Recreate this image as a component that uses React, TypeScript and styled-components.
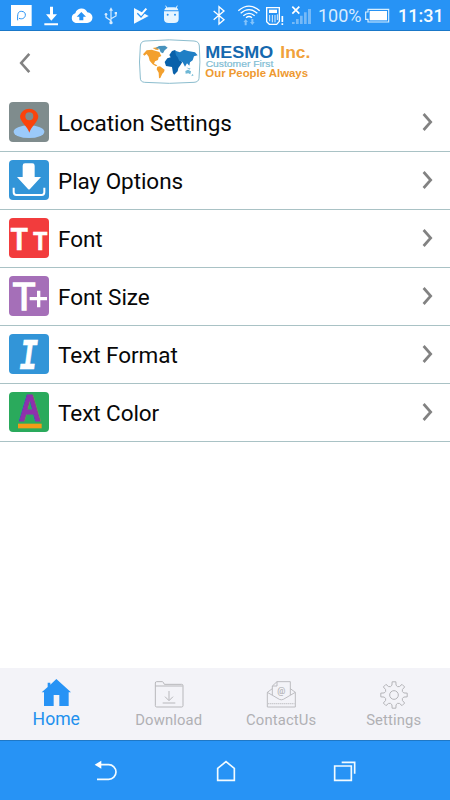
import React from "react";
import styled, { createGlobalStyle } from "styled-components";

const Global = createGlobalStyle`
  * { box-sizing: border-box; }
  body { margin: 0; background: #fff; font-family: Roboto, "Liberation Sans", sans-serif; }
  svg { display: block; flex: none; overflow: visible; }
`;

const Screen = styled.div`
  width: 450px;
  height: 800px;
  display: flex;
  flex-direction: column;
  background: #fff;
  overflow: hidden;
`;

const StatusBar = styled.div`
  height: 31px;
  flex: none;
  display: flex;
  justify-content: space-between;
  background: #2793f5;
  border-bottom: 1px solid #1a78c8;
  color: #fff;
`;

const StatusGroup = styled.div<{ $start?: number; $end?: number }>`
  display: flex;
  align-items: center;
  padding-left: ${(p) => p.$start ?? 0}px;
  padding-right: ${(p) => p.$end ?? 0}px;
`;

const StatusIcon = styled.svg<{ $gap: number }>`
  height: 30px;
  margin-left: ${(p) => p.$gap}px;
`;

const StatusText = styled.span<{ $w: number; $gap: number; $bold?: boolean }>`
  width: ${(p) => p.$w}px;
  margin-left: ${(p) => p.$gap}px;
  font-size: 18px;
  line-height: 30px;
  padding-top: 2px;
  font-weight: ${(p) => (p.$bold ? 500 : 400)};
  color: ${(p) => (p.$bold ? "#f4fbff" : "#d8ecff")};
  white-space: nowrap;
`;

const Header = styled.header`
  height: 63px;
  flex: none;
  display: flex;
  align-items: flex-start;
  padding: 3px 0 0 19px;
`;

const BackButton = styled.button`
  border: 0;
  padding: 18px 0 0;
  background: none;
  width: 111px;
`;

const List = styled.ul`
  list-style: none;
  margin: 0;
  padding: 0;
  flex: 1;
`;

const Row = styled.li`
  height: 58px;
  display: flex;
  align-items: center;
  padding: 0 16px 2px 9px;
  border-bottom: 1px solid #a9c2c5;
`;

const RowLabel = styled.span`
  flex: 1;
  margin-left: 9px;
  padding-top: 2px;
  font-size: 22.5px;
  line-height: 28px;
  letter-spacing: -0.06px;
  color: #080808;
`;

const TabBar = styled.nav`
  height: 72px;
  flex: none;
  display: grid;
  grid-template-columns: repeat(4, 1fr);
  background: #f3f3f8;
`;

const Tab = styled.div<{ $active?: boolean }>`
  display: flex;
  flex-direction: column;
  align-items: center;
  padding-top: 10px;
  color: ${(p) => (p.$active ? "#2190ee" : "#b0b0b4")};
  font-size: ${(p) => (p.$active ? 17.6 : 14.8)}px;
  line-height: 22px;
  letter-spacing: ${(p) => (p.$active ? 0 : 0.15)}px;
`;

const TabLabel = styled.span<{ $gap?: number }>`
  margin-top: ${(p) => p.$gap ?? 1}px;
`;

const NavBar = styled.div`
  height: 60px;
  flex: none;
  display: flex;
  justify-content: space-between;
  align-items: flex-start;
  padding: 19px 93px 0 94px;
  background: #2793f5;
  border-top: 1px solid #1f78c6;
`;

const Chevron = ({ left }: { left?: boolean }) => (
  <svg width="12" height="22" viewBox="0 0 12 22" fill="none" stroke="#828282" strokeWidth={left ? 2.6 : 2.7}>
    <path d={left ? "M10.3 1.9 2.2 11l8.1 9.1" : "M1.6 3 8.7 11l-7.1 8"} />
  </svg>
);

const BrandLogo = () => (
  <svg width="190" height="56" viewBox="0 0 570 168">
    <path d="M45 21Q118 14 192 21 207 22 208 36 212 84 207 133 206 144 192 145 118 151 44 145 31 144 31 132 26 84 31 36 32 22 45 21Z" fill="#fff" stroke="#8cbdce" strokeWidth="3" />
    <g fill="#f3a02e">
      <path d="M39 61 50 49 65 47 78 51 88 54 94 66 86 70 84 78 75 82 72 89 82 94 78 97 68 91 59 80 56 68 50 60 43 65Z" />
      <path d="M82 98 90 97 104 107 102 114 97 119 91 132 87 133 86 116 80 106Z" />
      <path d="M68 42 82 40 86 48 77 47Z" />
    </g>
    <path d="M76 43 87 36 105 35 113 41 104 49 99 58 92 55 88 44Z" fill="#4792bd" />
    <path d="M118 63 126 51 135 48 142 56 150 65 148 78 157 84 151 94 145 102 143 112 133 122 129 118 126 99 108 96 104 84 112 73 122 70Z" fill="#0961aa" />
    <path d="M135 50 150 55 162 47 174 51 195 55 203 64 192 67 188 79 180 85 178 95 171 88 165 98 158 85 147 79 143 70 138 64Z" fill="#207fc5" />
    <path d="M166 111 174 107 183 112 181 121 175 118 167 119ZM169 100l7 3 6 0-4 4ZM187 120l4 4-7 3Z" fill="#6eb7d5" />
    <g fontFamily="Liberation Sans, Arial, sans-serif" fontWeight="700">
      <text x="226" y="71" fontSize="50" fill="#1568ae" textLength="204" lengthAdjust="spacingAndGlyphs">MESMO</text>
      <text x="451" y="71" fontSize="50" fill="#f0a13b" textLength="90" lengthAdjust="spacingAndGlyphs">Inc.</text>
      <text x="227" y="98" fontSize="26" fontWeight="400" fill="#7fbdd4" stroke="#7fbdd4" strokeWidth="0.6" textLength="203" lengthAdjust="spacingAndGlyphs">Customer First</text>
      <text x="226" y="130" fontSize="33" fill="#ee9930" textLength="308" lengthAdjust="spacingAndGlyphs">Our People Always</text>
    </g>
  </svg>
);

const Tile = ({ color, children }: { color: string; children: React.ReactNode }) => (
  <svg width="40" height="40" viewBox="0 0 120 120" fontFamily="Liberation Sans, Arial, sans-serif" fontWeight="700">
    <rect width="120" height="120" rx="12" fill={color} />
    {children}
  </svg>
);

const rows = [
  {
    label: "Location Settings",
    icon: (
      <Tile color="#7f8c8d">
        <ellipse cx="60" cy="89" rx="46" ry="19" fill="#9bcafa" />
        <path fillRule="evenodd" d="M61 92C56 73 33 60 33 42a28 27 0 0 1 55 0C88 60 66 73 61 92ZM61 31a12 12 0 1 0 0 24 12 12 0 0 0 0-24Z" fill="#fb430b" />
      </Tile>
    ),
  },
  {
    label: "Play Options",
    icon: (
      <Tile color="#3295d8">
        <path d="M41 17q0-7 7-7h22q7 0 7 7v34h19L63 87q-3 3-6 0L24 51h17Z" fill="#fff" />
        <path d="M14 83v14q0 8 8 8h76q8 0 8-8V83" fill="none" stroke="#fff" strokeWidth="6" />
      </Tile>
    ),
  },
  {
    label: "Font",
    icon: (
      <Tile color="#f23c3d">
        <g fill="#fff" stroke="#fff" strokeWidth="2">
          <text x="5" y="97" fontSize="94" textLength="51" lengthAdjust="spacingAndGlyphs">T</text>
          <text x="73" y="97" fontSize="77" textLength="42" lengthAdjust="spacingAndGlyphs">T</text>
        </g>
      </Tile>
    ),
  },
  {
    label: "Font Size",
    icon: (
      <Tile color="#a56fb8">
        <text x="11" y="102" fontSize="116" fill="#fff" fontWeight="400" stroke="#fff" strokeWidth="5" textLength="68" lengthAdjust="spacingAndGlyphs">T</text>
        <path d="M62 68h52M89 44v50" stroke="#fff" strokeWidth="10" />
      </Tile>
    ),
  },
  {
    label: "Text Format",
    icon: (
      <Tile color="#3295d8">
        <text x="31" y="104" fontSize="133" fill="#fff" stroke="#fff" strokeWidth="2" fontFamily="Liberation Mono, monospace" fontStyle="italic" textLength="55" lengthAdjust="spacingAndGlyphs">I</text>
      </Tile>
    ),
  },
  {
    label: "Text Color",
    icon: (
      <Tile color="#2aaa5c">
        <text x="29" y="87" fontSize="110" fill="#8e30ad" stroke="#8e30ad" strokeWidth="3" textLength="66" lengthAdjust="spacingAndGlyphs">A</text>
        <rect x="27" y="95" width="71" height="14" fill="#f39c18" />
      </Tile>
    ),
  },
];

const HomeIcon = () => (
  <svg width="30" height="30" viewBox="0 0 90 90">
    <path d="M46 3 90 43H83V84H55V51H38V84H9V43H2L20 27V14h8v6Z" fill="#2793f5" />
  </svg>
);

const DownloadIcon = () => (
  <svg width="30" height="30" viewBox="0 0 90 90" fill="none" stroke="#b7b7bb" strokeWidth="3" strokeLinejoin="round">
    <path d="M4 24V15q0-4 4-4h17q3 0 6 8h52q4 0 4 4v60q0 4-4 4H8q-4 0-4-4V24H86M45 39V67M33 56l12 12 12-12M26 75h38" />
  </svg>
);

const ContactIcon = () => (
  <svg width="30" height="30" viewBox="0 0 90 90" fill="none" stroke="#b7b7bb" strokeWidth="2.7" strokeLinejoin="round">
    <path d="M19 51V24L33 11H73V51M19 24H33V11M19 32 4 43V87H88V43L73 32M4 43 40 64q6 3 12 0L88 43" />
    <path d="M7 77H86" strokeDasharray="3 3" strokeWidth="4" />
    <text x="46" y="49" textAnchor="middle" fontSize="27" fill="#b0b0b4" stroke="#b0b0b4" strokeWidth="0.3">@</text>
  </svg>
);

const toothAngles = [0, 45, 90, 135, 180, 225, 270, 315];
const gearPath =
  toothAngles
    .map((deg, i) => {
      const at = (a: number, r: number) => {
        const t = ((deg + a - 90) * Math.PI) / 180;
        return `${(45 + r * Math.cos(t)).toFixed(1)} ${(51 + r * Math.sin(t)).toFixed(1)}`;
      };
      return `${i ? "L" : "M"}${at(-12, 30)} L${at(-8, 40)} L${at(8, 40)} L${at(12, 30)} Q${at(22.5, 25)} ${at(33, 30)}`;
    })
    .join(" ") + "Z";

const GearIcon = () => (
  <svg width="30" height="30" viewBox="0 0 90 90" fill="none" stroke="#b4b4b8" strokeWidth="3" strokeLinejoin="round">
    <path d={gearPath} />
    <circle cx="45" cy="51" r="13" />
  </svg>
);

const App = () => (
  <>
    <Global />
    <Screen>
      <StatusBar>
        <StatusGroup $start={11}>
          <StatusIcon $gap={0} width="21" viewBox="33 0 63 90">
            <rect x="33" y="15" width="62" height="63" fill="#fff" />
            <path d="M53 61C52 41 54 34 64 34c9 0 13 6 12 12-1 8-9 13-19 9" fill="none" stroke="#2793f5" strokeWidth="3" />
          </StatusIcon>
          <StatusIcon $gap={12} width="14" viewBox="132 0 42 90" fill="#fff">
            <path d="M150 20h9v23h12L154 62 138 43h12ZM133 70h41v6h-41Z" />
          </StatusIcon>
          <StatusIcon $gap={13} width="21" viewBox="213 0 63 90">
            <path d="M227 69a15 15 0 0 1-1-29 19 19 0 0 1 36-3 16 16 0 0 1-1 32Z" fill="#fff" />
            <path d="M244 36 258 50H250V61H238V50H230Z" fill="#2793f5" />
          </StatusIcon>
          <StatusIcon $gap={12} width="14" viewBox="312 0 42 90" fill="none" stroke="#d7ecff" strokeWidth="3.5">
            <path d="M333 29V66M333 62 318 52V43M333 56 348 48V41" />
            <path d="M327 32 333 22l6 10ZM344 36h7v7h-7Z" fill="#d7ecff" stroke="none" />
            <circle cx="318" cy="43" r="4" fill="#d7ecff" stroke="none" />
            <circle cx="333" cy="68" r="5" fill="#d7ecff" stroke="none" />
          </StatusIcon>
          <StatusIcon $gap={15} width="16" viewBox="399 0 48 90">
            <path d="M402 24 446 48 402 71Z" fill="#f5fbff" />
            <path d="M412 40 423 51 440 31" fill="none" stroke="#2793f5" strokeWidth="4" />
            <path d="M417 36 424 43 439 26" fill="none" stroke="#fff" strokeWidth="6" />
          </StatusIcon>
          <StatusIcon $gap={14} width="16" viewBox="489 0 48 90">
            <path d="M492 34H536V57Q536 69 522 69H506Q492 69 492 57ZM493 31Q494 22 506 22H522Q534 22 535 31Z" fill="#e6f5ff" />
            <path d="M501 25 497 17M528 25l4-8" stroke="#e6f5ff" strokeWidth="3" />
            <circle cx="503" cy="44" r="3" fill="#2793f5" />
            <circle cx="525" cy="44" r="3" fill="#2793f5" />
          </StatusIcon>
        </StatusGroup>
        <StatusGroup $end={7}>
          <StatusIcon $gap={0} width="12" viewBox="39 0 36 90" fill="none" stroke="#fff" strokeWidth="4">
            <path d="M41 33 72 59 57 72V20L72 33 41 59" />
          </StatusIcon>
          <StatusIcon $gap={13} width="22" viewBox="114 0 66 90" fill="none" stroke="#fff" strokeWidth="4">
            <path d="M115 32Q147 5 179 32M122 40Q147 18 172 40M130 47Q147 33 164 47M138 53Q147 46 156 53" />
            <path d="M130 66 137 58l7 8h-4v10h-6V66ZM150 66h4V57h6v9h4l-7 9Z" fill="#83c3fb" stroke="none" />
          </StatusIcon>
          <StatusIcon $gap={6} width="18" viewBox="198 0 54 90" fill="none" stroke="#fff" strokeWidth="4">
            <path d="M200 23H238V64L230 73H208L200 65Z" />
            <path d="M207 29h24v10h-24Z" fill="#fff" stroke="none" />
            <path d="M209 45V64M217 45V67M225 45V67M232 43V60" strokeWidth="2.5" />
            <path d="M247 48V66M247 70v5" strokeWidth="5" />
          </StatusIcon>
          <StatusIcon $gap={7} width="20" viewBox="273 0 60 90">
            <path d="M276 66h8v6h-8ZM288 57h8v15h-8ZM300 47h8v25h-8ZM312 37h8v35h-8ZM324 27h9v45h-9Z" fill="#75b9f7" />
            <path d="M277 20 298 41M298 20 277 41" stroke="#fff" strokeWidth="5" />
          </StatusIcon>
          <StatusText $gap={7} $w={43}>100%</StatusText>
          <StatusIcon $gap={4} width="25" viewBox="498 0 75 90">
            <path d="M507 28H569V66H507V58H500V36H507Z" fill="none" stroke="#d8efff" strokeWidth="3.5" />
            <path d="M512 33H564V61H512Z" fill="#fff" />
          </StatusIcon>
          <StatusText $gap={8} $w={45} $bold>11:31</StatusText>
        </StatusGroup>
      </StatusBar>
      <Header>
        <BackButton aria-label="Back"><Chevron left /></BackButton>
        <BrandLogo />
      </Header>
      <List>
        {rows.map((r) => (
          <Row key={r.label}>
            {r.icon}
            <RowLabel>{r.label}</RowLabel>
            <Chevron />
          </Row>
        ))}
      </List>
      <TabBar>
        <Tab $active><HomeIcon /><TabLabel $gap={0}>Home</TabLabel></Tab>
        <Tab><DownloadIcon /><TabLabel>Download</TabLabel></Tab>
        <Tab><ContactIcon /><TabLabel>ContactUs</TabLabel></Tab>
        <Tab><GearIcon /><TabLabel>Settings</TabLabel></Tab>
      </TabBar>
      <NavBar>
        <svg width="24" height="22" viewBox="42 57 72 66">
          <path d="M60 71H86a22 22 0 0 1 0 44H51" fill="none" stroke="#f2fbff" strokeWidth="5" />
          <path d="M44 71 64 59V83Z" fill="#fff" />
        </svg>
        <svg width="22" height="22" viewBox="402 57 66 66" fill="none" stroke="#f2fbff" strokeWidth="5">
          <path d="M410 118V82L435 62 460 82V118Z" />
        </svg>
        <svg width="24" height="22" viewBox="760 57 72 66" fill="none" stroke="#f2fbff" strokeWidth="5">
          <path d="M765 75H815V118H765ZM786 64H825V98" />
        </svg>
      </NavBar>
    </Screen>
  </>
);

export default App;
